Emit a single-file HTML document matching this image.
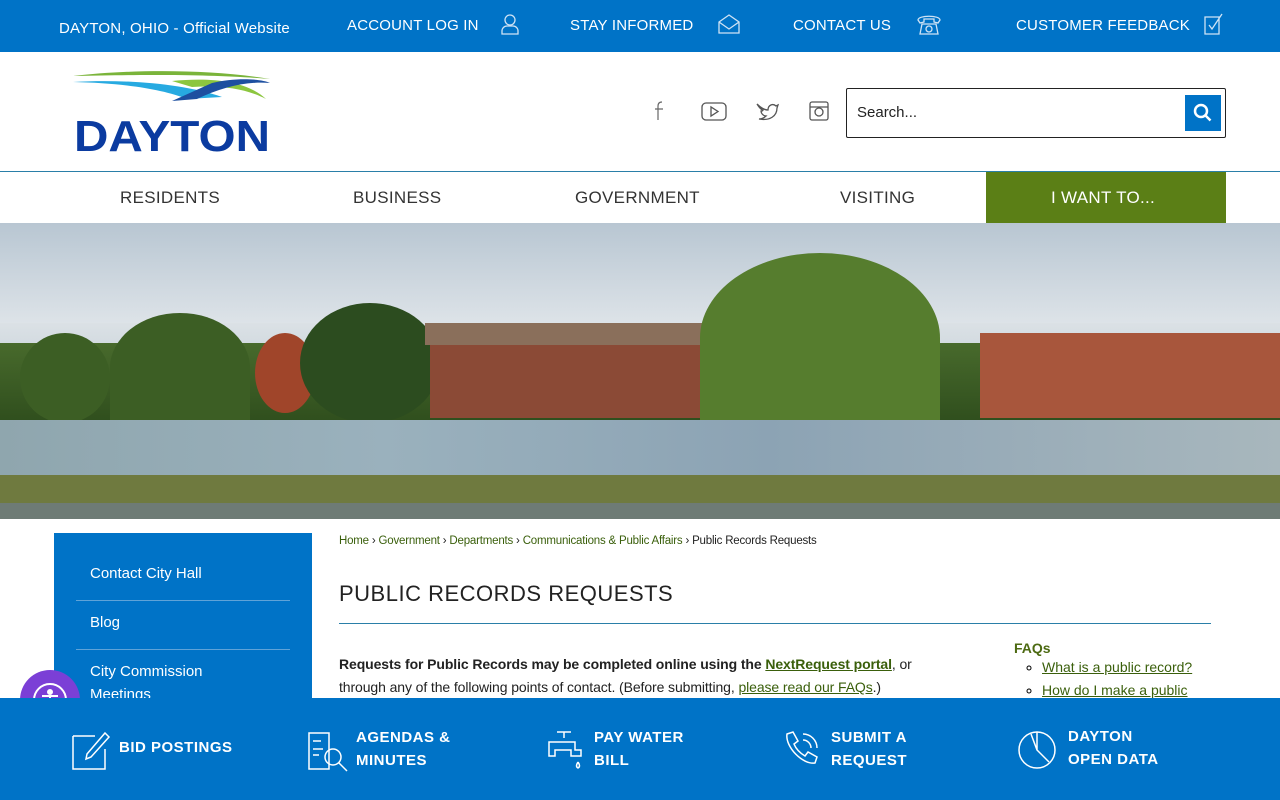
<!DOCTYPE html>
<html><head><meta charset="utf-8"><style>
*{margin:0;padding:0;box-sizing:border-box}
body{width:1280px;height:800px;overflow:hidden;font-family:"Liberation Sans",sans-serif;background:#fff;position:relative}
.top{position:absolute;top:0;left:0;width:1280px;height:52px;background:#0073c7;color:#fff;font-size:15px;letter-spacing:.2px}
.top span{position:absolute;top:17px}
.top svg{position:absolute}
.hdr{position:absolute;top:52px;left:0;width:1280px;height:120px;border-bottom:1px solid #2a7fa8}
.nav{position:absolute;top:172px;left:0;width:1280px;height:51px}
.nav span{position:absolute;top:16px;font-size:17px;color:#333;letter-spacing:.3px}
.hero{position:absolute;top:223px;left:0;width:1280px;height:296px;overflow:hidden;background:linear-gradient(#c9d3dc 0,#dfe4e8 30%,#cfd8de 45%)}
.side{position:absolute;top:533px;left:54px;width:258px;height:170px;background:#0073c7}
.side div{position:absolute;left:22px;width:214px;color:#fff;font-size:15px;border-bottom:1px solid #5fa3d8;padding:0 0 15px 14px;line-height:23px}
.crumb{position:absolute;top:535px;left:339px;font-size:11.5px;color:#222;letter-spacing:-.2px}
.crumb a{color:#3a5f0b;text-decoration:none}
h1{position:absolute;top:581px;left:339px;font-weight:normal;font-size:22px;letter-spacing:.5px;color:#222}
.rule{position:absolute;top:623px;left:339px;width:872px;height:1px;background:#2a7fa8}
.p{position:absolute;top:653px;left:339px;font-size:14px;line-height:23px;color:#222;width:610px;letter-spacing:-.1px}
.p a{color:#3a5f0b}
.faq{position:absolute;top:640px;left:1014px;font-size:14px}
.bot{position:absolute;top:698px;left:0;width:1280px;height:102px;background:#0073c7;color:#fff;font-size:15px;font-weight:bold;letter-spacing:.5px;line-height:23px}
.bot span{position:absolute}
.bot svg{position:absolute}
</style></head><body>
<div class="top">
<span style="left:59px;top:20px;font-size:15px">DAYTON, OHIO - Official Website</span>
<span style="left:347px">ACCOUNT LOG IN</span>
<svg style="left:500px;top:13px" width="20" height="22" fill="none" stroke="#cfe3f5" stroke-width="1.3"><circle cx="10" cy="7" r="5"/><path d="M2 21v-3a5 5 0 0 1 5-5h6a5 5 0 0 1 5 5v3z"/></svg>
<span style="left:570px">STAY INFORMED</span>
<svg style="left:717px;top:13px" width="24" height="22" fill="none" stroke="#cfe3f5" stroke-width="1.3"><path d="M2 9l10-7 10 7v11H2zM2 9l10 7 10-7"/></svg>
<span style="left:793px">CONTACT US</span>
<svg style="left:916px;top:12px" width="26" height="24" fill="none" stroke="#cfe3f5" stroke-width="1.3"><path d="M2 8c0-5 22-5 22 0l-2 3-4-1V7H8v3l-4 1z"/><path d="M6 12h14l2 10H4z"/><circle cx="13" cy="17" r="3"/></svg>
<span style="left:1016px">CUSTOMER FEEDBACK</span>
<svg style="left:1203px;top:12px" width="22" height="24" fill="none" stroke="#cfe3f5" stroke-width="1.3"><path d="M2 5h14v17H2zM6 13l3 4 10-15"/></svg>
</div>
<div class="hdr">
<svg style="position:absolute;left:72px;top:17px" width="200" height="90">
<path d="M1 7C60 0 140 0 198 10C150 6 90 5 1 7z" fill="#7ab43a"/>
<path d="M100 12C140 8 175 12 194 30C175 20 150 16 120 18z" fill="#8cc63f"/>
<path d="M1 13C50 10 110 14 150 28L115 30C90 20 50 14 1 13z" fill="#27aae1"/>
<path d="M100 32L140 14C165 8 190 10 198 14C175 12 150 18 125 30z" fill="#1d4fa0"/>
<text x="2" y="82" font-family="Liberation Sans" font-weight="bold" font-size="44" fill="#0b3ba0" textLength="196" lengthAdjust="spacingAndGlyphs">DAYTON</text>
</svg>
<svg style="position:absolute;left:652px;top:48px" width="16" height="22" fill="none" stroke="#666" stroke-width="1.2"><path d="M10 2c-3 0-4 2-4 4v14M3 9h8"/></svg>
<svg style="position:absolute;left:701px;top:49px" width="26" height="22" fill="none" stroke="#555" stroke-width="1.3"><rect x="1" y="2" width="24" height="17" rx="4"/><path d="M10 6v9l7-4.5z"/></svg>
<svg style="position:absolute;left:755px;top:48px" width="24" height="22" fill="none" stroke="#555" stroke-width="1.3"><path d="M2 4c4 4 8 6 11 6 0-5 5-7 8-4l2-1-1 3c0 8-7 13-18 11 3 0 5-1 7-3-3 0-5-3-5-5 1 0 2 0 2-1-2 0-4-3-6-6z"/></svg>
<svg style="position:absolute;left:808px;top:48px" width="22" height="22" fill="none" stroke="#555" stroke-width="1.3"><rect x="2" y="2" width="18" height="18" rx="2"/><circle cx="11" cy="12" r="4"/><path d="M2 7h18"/></svg>
<div style="position:absolute;left:846px;top:36px;width:380px;height:50px;border:1.5px solid #222;border-radius:2px"><span style="position:absolute;left:10px;top:15px;font-size:15px;color:#222">Search...</span><div style="position:absolute;right:4px;top:6px;width:36px;height:36px;background:#0073c7"><svg width="36" height="36" fill="none" stroke="#fff" stroke-width="2.5"><circle cx="16" cy="16" r="6"/><path d="M20.5 20.5l5 5"/></svg></div></div>
</div>
<div class="nav">
<span style="left:120px">RESIDENTS</span><span style="left:353px">BUSINESS</span><span style="left:575px">GOVERNMENT</span><span style="left:840px">VISITING</span>
<div style="position:absolute;left:986px;top:0;width:240px;height:51px;background:#5b7f16"><span style="left:65px;color:#fff">I WANT TO...</span></div>
</div>
<div class="hero">
<div style="position:absolute;left:0;top:0;width:1280px;height:100px;background:linear-gradient(#b8c6d2,#dde3e8)"></div>
<div style="position:absolute;left:0;top:120px;width:1280px;height:80px;background:linear-gradient(#486a2c,#2f4e1d)"></div>
<div style="position:absolute;left:20px;top:110px;width:90px;height:90px;border-radius:50%;background:#3c5e24"></div>
<div style="position:absolute;left:110px;top:90px;width:140px;height:110px;border-radius:50% 50% 0 0;background:#3c5e24"></div>
<div style="position:absolute;left:255px;top:110px;width:60px;height:80px;border-radius:50%;background:#a0452a"></div>
<div style="position:absolute;left:300px;top:80px;width:140px;height:120px;border-radius:50%;background:#2c4c1f"></div>
<div style="position:absolute;left:430px;top:115px;width:270px;height:80px;background:#8b4a36"></div>
<div style="position:absolute;left:425px;top:100px;width:280px;height:22px;background:#8a6f5b"></div>
<div style="position:absolute;left:700px;top:30px;width:240px;height:170px;border-radius:50% 50% 0 0;background:#567d2e"></div>
<div style="position:absolute;left:980px;top:110px;width:300px;height:85px;background:#a8563c"></div>
<div style="position:absolute;left:0;top:197px;width:1280px;height:55px;background:linear-gradient(90deg,#8fa6ae,#9ab1bd 30%,#8ca3b4 60%,#a8b7bd)"></div>
<div style="position:absolute;left:0;top:252px;width:1280px;height:28px;background:#6f7a3f"></div>
<div style="position:absolute;left:0;top:280px;width:1280px;height:16px;background:#6e7b75"></div>
</div>
<div class="side">
<div style="top:29px">Contact City Hall</div>
<div style="top:78px">Blog</div>
<div style="top:127px;border:none">City Commission<br>Meetings</div>
</div>
<div style="position:absolute;left:20px;top:670px;width:60px;height:60px;border-radius:50%;background:#7b3fd6"><svg width="60" height="60" fill="none" stroke="#fff" stroke-width="2"><circle cx="30" cy="30" r="16"/><circle cx="30" cy="22" r="2" fill="#fff"/><path d="M22 26h16M30 26v7l-4 7M30 33l4 7"/></svg></div>
<div class="crumb"><a>Home</a> › <a>Government</a> › <a>Departments</a> › <a>Communications &amp; Public Affairs</a> › Public Records Requests</div>
<h1>PUBLIC RECORDS REQUESTS</h1>
<div class="rule"></div>
<div class="p"><b>Requests for Public Records may be completed online using the <a style="font-weight:bold;text-decoration:underline">NextRequest portal</a></b>, or through any of the following points of contact. (Before submitting, <a style="text-decoration:underline">please read our FAQs</a>.)</div>
<div class="faq"><b style="color:#4d6a12">FAQs</b><ul style="margin-left:14px;list-style:circle;line-height:23px;padding-left:14px"><li><a style="color:#3a5f0b;text-decoration:underline">What is a public record?</a></li><li><a style="color:#3a5f0b;text-decoration:underline">How do I make a public</a></li></ul></div>
<div class="bot">
<svg style="left:71px;top:33px" width="40" height="40" fill="none" stroke="#fff" stroke-width="1.5"><path d="M2 5h22M2 5v33h32V18M2 38"/><path d="M34 2l4 4-18 20-5 2 1-5z"/></svg>
<span style="left:119px;top:38px">BID POSTINGS</span>
<svg style="left:307px;top:33px" width="44" height="42" fill="none" stroke="#fff" stroke-width="1.5"><path d="M2 2h20v36H2zM6 10h8M6 18h10M6 24h6"/><circle cx="26" cy="26" r="8"/><path d="M32 32l8 8"/></svg>
<span style="left:356px;top:28px">AGENDAS &amp;<br>MINUTES</span>
<svg style="left:545px;top:30px" width="42" height="44" fill="none" stroke="#fff" stroke-width="1.5"><path d="M12 4h14M19 4v6M4 14h26v8h6v6H26v-6H10v6H4zM33 34c2 3 2 5 0 6-2-1-2-3 0-6"/></svg>
<span style="left:594px;top:28px">PAY WATER<br>BILL</span>
<svg style="left:781px;top:32px" width="40" height="40" fill="none" stroke="#fff" stroke-width="1.5"><path d="M6 4l6-2 5 9-4 3c2 5 6 9 11 12l3-4 9 5-2 6c-12 2-30-16-28-29zM22 4a14 14 0 0 1 14 14M22 10a8 8 0 0 1 8 8"/></svg>
<span style="left:831px;top:28px">SUBMIT A<br>REQUEST</span>
<svg style="left:1017px;top:32px" width="40" height="40" fill="none" stroke="#fff" stroke-width="1.5"><circle cx="20" cy="20" r="18"/><path d="M20 2v18l12 12M20 20l-6-16"/></svg>
<span style="left:1068px;top:27px">DAYTON<br>OPEN DATA</span>
</div>
</body></html>
